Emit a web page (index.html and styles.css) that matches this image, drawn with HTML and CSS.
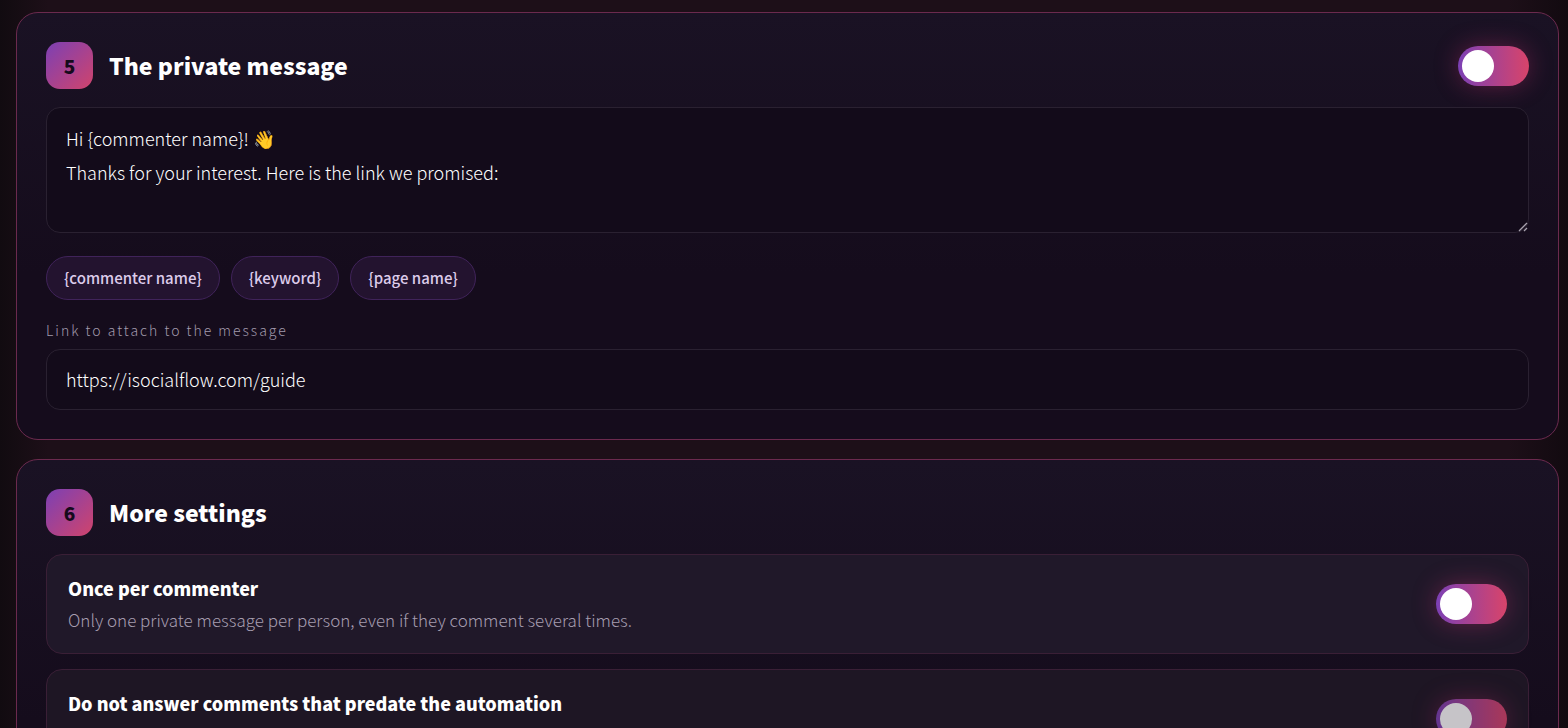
FILE: index.html
```html
<!DOCTYPE html>
<html lang="en">
<head>
<meta charset="utf-8">
<meta name="viewport" content="width=device-width, initial-scale=1">
<title>Automation settings</title>
<link rel="stylesheet" href="styles.css">
</head>
<body>
<main class="page">
  <section class="card">
    <header class="card-header">
      <span class="step">5</span>
      <h2 class="card-title" id="private-message">The private message</h2>
      <input class="toggle" type="checkbox" role="switch" aria-labelledby="private-message" checked>
    </header>
    <div class="message-box">
      <textarea class="field message" aria-labelledby="private-message">Hi {commenter name}! 👋
Thanks for your interest. Here is the link we promised:</textarea>
      <svg class="grip" viewBox="0 0 10 10" aria-hidden="true"><path d="M1 9 9 1M6 9 9 6"/></svg>
    </div>
    <div class="chips">
      <button class="chip" type="button">{commenter name}</button>
      <button class="chip" type="button">{keyword}</button>
      <button class="chip" type="button">{page name}</button>
    </div>
    <label class="field-label" for="link">Link to attach to the message</label>
    <input class="field link" id="link" type="text" value="https://isocialflow.com/guide">
  </section>

  <section class="card">
    <header class="card-header">
      <span class="step">6</span>
      <h2 class="card-title">More settings</h2>
    </header>
    <div class="settings">
      <div class="setting">
        <div class="setting-text">
          <label class="setting-title" for="once">Once per commenter</label>
          <p class="setting-note">Only one private message per person, even if they comment several times.</p>
        </div>
        <input class="toggle" id="once" type="checkbox" role="switch" checked>
      </div>
      <div class="setting setting-dim">
        <div class="setting-text">
          <label class="setting-title" for="predate">Do not answer comments that predate the automation</label>
        </div>
        <input class="toggle" id="predate" type="checkbox" role="switch" checked>
      </div>
    </div>
  </section>
</main>
</body>
</html>
```
FILE: styles.css
```css
* {
  box-sizing: border-box;
}

body {
  margin: 0;
  height: 100vh;
  overflow: hidden;
  background: linear-gradient(90deg, #110b10 0, #1d0f18 48px, #1d0f18 calc(100% - 60px), #120a10 100%);
  color: #fff;
  font-family: "Noto Sans CJK JP", "Noto Sans", sans-serif;
}

.page {
  display: flex;
  flex-direction: column;
  gap: 19px;
  padding: 12px 9px 12px 16px;
}

.card {
  display: flex;
  flex-direction: column;
  padding: 29px;
  border: 1px solid #6b2a4e;
  border-radius: 22px;
  background: linear-gradient(180deg, #1a1224 0, #150c1c 260px, #150c1c 100%);
}

.card-header {
  display: flex;
  align-items: center;
  gap: 16px;
  margin-bottom: 18px;
}

.step {
  display: grid;
  place-items: center;
  width: 47px;
  height: 47px;
  border-radius: 14px;
  background: linear-gradient(135deg, #7c40b4, #d0446c);
  color: #150a1c;
  font-size: 19px;
  font-weight: 900;
  line-height: 24px;
}

.card-title {
  flex: 1;
  margin: 0;
  padding-bottom: 2px;
  font-size: 23px;
  font-weight: 900;
  line-height: 30px;
}

.toggle {
  appearance: none;
  flex: none;
  display: flex;
  align-items: center;
  width: 71px;
  height: 40px;
  margin: 0;
  padding: 4px;
  border-radius: 20px;
  background: linear-gradient(90deg, #7c40b4, #d8446a);
  box-shadow: 0 0 24px rgba(216, 52, 120, 0.35);
}

.toggle::before {
  content: "";
  width: 32px;
  height: 32px;
  border-radius: 50%;
  background: #fff;
}

.field {
  display: block;
  width: 100%;
  margin: 0;
  padding: 13px 19px 15px;
  border: 1px solid #2a2131;
  border-radius: 14px;
  outline: 0;
  background: #130b1a;
  color: #fff;
  font-family: inherit;
  font-size: 18px;
  font-weight: 300;
  line-height: 34px;
}

.message-box {
  position: relative;
}

.message {
  height: 126px;
  resize: none;
}

.grip {
  position: absolute;
  right: 1px;
  bottom: 1px;
  width: 10px;
  height: 10px;
  fill: none;
  stroke: #a8a2ae;
  stroke-width: 1.3;
}

.link {
  height: 61px;
}

.chips {
  display: flex;
  gap: 11px;
  margin: 23px 0 19px;
}

.chip {
  height: 44px;
  padding: 0 17px 1px;
  border: 1px solid #40235a;
  border-radius: 22px;
  background: #23132f;
  color: #dccbea;
  font-family: inherit;
  font-size: 15px;
  font-weight: 500;
  line-height: 24px;
}

.field-label {
  margin-bottom: 8px;
  color: #a29aac;
  font-size: 14px;
  font-weight: 300;
  line-height: 22px;
  letter-spacing: 2px;
}

.settings {
  display: flex;
  flex-direction: column;
  gap: 15px;
}

.setting {
  display: flex;
  align-items: center;
  justify-content: space-between;
  gap: 24px;
  min-height: 100px;
  padding: 17px 21px;
  border: 1px solid #3a1f36;
  border-radius: 16px;
  background: #201829;
}

.setting-dim {
  background: #1e1624;
}

.setting-dim .toggle {
  opacity: 0.75;
}

.setting-text {
  align-self: flex-start;
}

.setting-title {
  display: block;
  font-size: 18px;
  font-weight: 900;
  line-height: 32px;
}

.setting-note {
  margin: 0;
  color: #a69db0;
  font-size: 17px;
  font-weight: 300;
  line-height: 32px;
}
```
